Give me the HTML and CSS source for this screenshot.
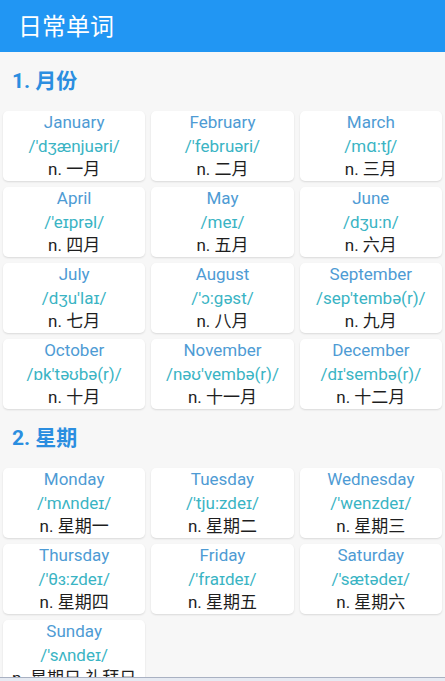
FILE: index.html
```html
<!DOCTYPE html>
<html lang="zh">
<head>
<meta charset="utf-8">
<link rel="stylesheet" href="styles.css">
</head>
<body>
<header class="appbar">日常单词</header>
<main class="content">
  <h2 class="section-title">1. 月份</h2>
  <div class="grid">
    <div class="card"><div class="word">January</div><div class="ipa">/'dʒænjuəri/</div><div class="cn">n. 一月</div></div>
    <div class="card"><div class="word">February</div><div class="ipa">/'februəri/</div><div class="cn">n. 二月</div></div>
    <div class="card"><div class="word">March</div><div class="ipa">/mɑ:tʃ/</div><div class="cn">n. 三月</div></div>
    <div class="card"><div class="word">April</div><div class="ipa">/'eɪprəl/</div><div class="cn">n. 四月</div></div>
    <div class="card"><div class="word">May</div><div class="ipa">/meɪ/</div><div class="cn">n. 五月</div></div>
    <div class="card"><div class="word">June</div><div class="ipa">/dʒu:n/</div><div class="cn">n. 六月</div></div>
    <div class="card"><div class="word">July</div><div class="ipa">/dʒu'laɪ/</div><div class="cn">n. 七月</div></div>
    <div class="card"><div class="word">August</div><div class="ipa">/'ɔ:gəst/</div><div class="cn">n. 八月</div></div>
    <div class="card"><div class="word">September</div><div class="ipa">/sep'tembə(r)/</div><div class="cn">n. 九月</div></div>
    <div class="card"><div class="word">October</div><div class="ipa">/ɒk'təʊbə(r)/</div><div class="cn">n. 十月</div></div>
    <div class="card"><div class="word">November</div><div class="ipa">/nəʊ'vembə(r)/</div><div class="cn">n. 十一月</div></div>
    <div class="card"><div class="word">December</div><div class="ipa">/dɪ'sembə(r)/</div><div class="cn">n. 十二月</div></div>
  </div>
  <h2 class="section-title">2. 星期</h2>
  <div class="grid">
    <div class="card"><div class="word">Monday</div><div class="ipa">/'mʌndeɪ/</div><div class="cn">n. 星期一</div></div>
    <div class="card"><div class="word">Tuesday</div><div class="ipa">/'tju:zdeɪ/</div><div class="cn">n. 星期二</div></div>
    <div class="card"><div class="word">Wednesday</div><div class="ipa">/'wenzdeɪ/</div><div class="cn">n. 星期三</div></div>
    <div class="card"><div class="word">Thursday</div><div class="ipa">/'θɜ:zdeɪ/</div><div class="cn">n. 星期四</div></div>
    <div class="card"><div class="word">Friday</div><div class="ipa">/'fraɪdeɪ/</div><div class="cn">n. 星期五</div></div>
    <div class="card"><div class="word">Saturday</div><div class="ipa">/'sætədeɪ/</div><div class="cn">n. 星期六</div></div>
    <div class="card"><div class="word">Sunday</div><div class="ipa">/'sʌndeɪ/</div><div class="cn">n. 星期日 礼拜日</div></div>
  </div>
</main>
<div class="bottom-edge"></div>
</body>
</html>
```
FILE: styles.css
```css
html, body {
  margin: 0;
  padding: 0;
  height: 681px;
  overflow: hidden;
  background: #f7f7f7;
  font-family: Roboto, "Noto Sans CJK SC", sans-serif;
}
.appbar {
  height: 52px;
  box-sizing: border-box;
  background: #2196f3;
  color: #ffffff;
  font-size: 24px;
  line-height: 52px;
  padding-left: 18px;
  padding-top: 1px;
}
.content {
  padding: 0 3px;
}
.section-title {
  margin: 0;
  height: 59px;
  line-height: 58px;
  padding-left: 9px;
  font-size: 21px;
  font-weight: bold;
  color: #2b8ee0;
}
.grid {
  display: grid;
  grid-template-columns: repeat(3, 1fr);
  column-gap: 6px;
  row-gap: 6px;
}
.card {
  background: #ffffff;
  border-radius: 5px;
  box-shadow: 0 1px 2px rgba(0,0,0,0.12);
  text-align: center;
  height: 70px;
  font-size: 17px;
  line-height: 23.5px;
}
.word {
  color: #4e9bd4;
}
.ipa {
  color: #3ab4c4;
}
.ipa-mark {
  font-style: italic;
}
.cn {
  color: #1e1e1e;
}
.bottom-edge {
  position: fixed;
  left: 0;
  right: 0;
  bottom: 0;
  height: 3px;
  background: #e6eaf2;
  border-top: 1px solid #a9b1c2;
}
```
